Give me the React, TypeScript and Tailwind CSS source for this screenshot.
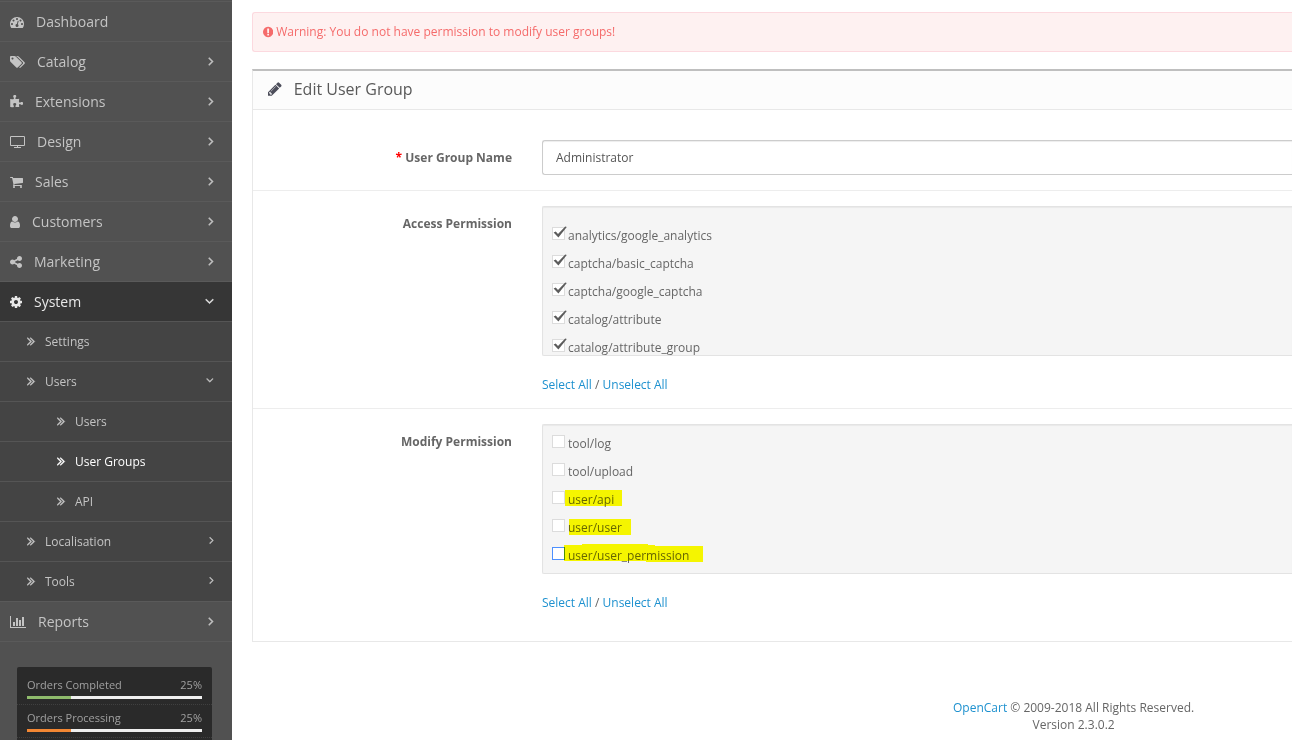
import React from "react";

// each icon keeps its own advance width, drawn on a 1792 unit em
const icons = {
  dashboard: {
    width: 1792,
    d: "M384 1152q0-53-37.5-90.5t-90.5-37.5-90.5 37.5-37.5 90.5 37.5 90.5 90.5 37.5 90.5-37.5 37.5-90.5zm192-448q0-53-37.5-90.5t-90.5-37.5-90.5 37.5-37.5 90.5 37.5 90.5 90.5 37.5 90.5-37.5 37.5-90.5zm428 481l101-382q6-26-7.5-48.5t-38.5-29.5-48 6.5-30 39.5l-101 382q-60 5-107 43.5t-63 98.5q-20 77 20 146t117 89 146-20 89-117q16-60-6-117t-72-91zm660-33q0-53-37.5-90.5t-90.5-37.5-90.5 37.5-37.5 90.5 37.5 90.5 90.5 37.5 90.5-37.5 37.5-90.5zm-640-640q0-53-37.5-90.5t-90.5-37.5-90.5 37.5-37.5 90.5 37.5 90.5 90.5 37.5 90.5-37.5 37.5-90.5zm448 192q0-53-37.5-90.5t-90.5-37.5-90.5 37.5-37.5 90.5 37.5 90.5 90.5 37.5 90.5-37.5 37.5-90.5zm320 448q0 261-141 483-19 29-54 29h-1402q-35 0-54-29-141-221-141-483 0-182 71-348t191-286 286-191 348-71 348 71 286 191 191 286 71 348z",
  },
  tags: {
    width: 1920,
    d: "M448 448q0-53-37.5-90.5t-90.5-37.5-90.5 37.5-37.5 90.5 37.5 90.5 90.5 37.5 90.5-37.5 37.5-90.5zm1067 576q0 53-37 90l-491 492q-39 37-91 37-53 0-90-37l-715-716q-38-37-64.5-101t-26.5-117v-416q0-52 38-90t90-38h416q53 0 117 26.5t102 64.5l715 714q37 39 37 91zm384 0q0 53-37 90l-491 492q-39 37-91 37-36 0-59-14t-53-45l470-470q37-37 37-90 0-52-37-91l-715-714q-38-38-102-64.5t-117-26.5h224q53 0 117 26.5t102 64.5l715 714q37 39 37 91z",
  },
  puzzle: {
    x: 64,
    width: 1664,
    d: "M1755 1083q0 81-44.5 135t-123.5 54q-41 0-77.5-17.5t-59-38-56.5-38-71-17.5q-110 0-110 124 0 39 16 115t15 115v5q-22 0-33 1-34 3-97.5 11.5t-115.5 13.5-98 5q-61 0-103-26.5t-42-83.5q0-37 17.5-71t38-56.5 38-59 17.5-77.5q0-79-54-123.5t-135-44.5q-84 0-143 45.5t-59 127.5q0 43 15 83t33.5 64.5 33.5 53 15 50.5q0 45-46 89-37 35-117 35-95 0-245-24-9-2-27.5-4t-27.5-4l-13-2q-1 0-3-1-2 0-2-1v-1024q2 1 17.5 3.5t34 5 21.5 3.5q150 24 245 24 80 0 117-35 46-44 46-89 0-22-15-50.5t-33.5-53-33.5-64.5-15-83q0-82 59-127.5t144-45.5q80 0 134 44.5t54 123.5q0 41-17.5 77.5t-38 59-38 56.5-17.5 71q0 57 42 83.5t103 26.5q64 0 180-15t163-17v2q-1 2-3.5 17.5t-5 34-3.5 21.5q-24 150-24 245 0 80 35 117 44 46 89 46 22 0 50.5-15t53-33.5 64.5-33.5 83-15q82 0 127.5 59t45.5 143z",
  },
  television: {
    width: 1920,
    d: "M1792 1248v-960q0-13-9.5-22.5t-22.5-9.5h-1600q-13 0-22.5 9.5t-9.5 22.5v960q0 13 9.5 22.5t22.5 9.5h1600q13 0 22.5-9.5t9.5-22.5zm128-960v960q0 66-47 113t-113 47h-736v128h352q14 0 23 9t9 23v64q0 14-9 23t-23 9h-832q-14 0-23-9t-9-23v-64q0-14 9-23t23-9h352v-128h-736q-66 0-113-47t-47-113v-960q0-66 47-113t113-47h1600q66 0 113 47t47 113z",
  },
  cart: {
    x: 64,
    width: 1664,
    d: "M704 1536q0 52-38 90t-90 38-90-38-38-90 38-90 90-38 90 38 38 90zm896 0q0 52-38 90t-90 38-90-38-38-90 38-90 90-38 90 38 38 90zm128-1088v512q0 24-16.5 42.5t-40.5 21.5l-1044 122q13 60 13 70 0 16-24 64h920q26 0 45 19t19 45-19 45-45 19h-1024q-26 0-45-19t-19-45q0-11 8-31.5t16-36 21.5-40 15.5-29.5l-177-823h-204q-26 0-45-19t-19-45 19-45 45-19h256q16 0 28.5 6.5t19.5 15.5 13 24.5 8 26 5.5 29.5 4.5 26h1201q26 0 45 19t19 45z",
  },
  user: {
    x: 256,
    width: 1280,
    d: "M1536 1399q0 109-62.5 187t-150.5 78h-854q-88 0-150.5-78t-62.5-187q0-85 8.5-160.5t31.5-152 58.5-131 94-89 134.5-34.5q131 128 313 128t313-128q76 0 134.5 34.5t94 89 58.5 131 31.5 152 8.5 160.5zm-256-887q0 159-112.5 271.5t-271.5 112.5-271.5-112.5-112.5-271.5 112.5-271.5 271.5-112.5 271.5 112.5 112.5 271.5z",
  },
  share: {
    x: 128,
    width: 1536,
    d: "M1344 1024q133 0 226.5 93.5t93.5 226.5-93.5 226.5-226.5 93.5-226.5-93.5-93.5-226.5q0-12 2-34l-360-180q-92 86-218 86-133 0-226.5-93.5t-93.5-226.5 93.5-226.5 226.5-93.5q126 0 218 86l360-180q-2-22-2-34 0-133 93.5-226.5t226.5-93.5 226.5 93.5 93.5 226.5-93.5 226.5-226.5 93.5q-126 0-218-86l-360 180q2 22 2 34t-2 34l360 180q92-86 218-86z",
  },
  cog: {
    x: 128,
    width: 1536,
    d: "M1152 896q0-106-75-181t-181-75-181 75-75 181 75 181 181 75 181-75 75-181zm512-109v222q0 12-8 23t-20 13l-185 28q-19 54-39 91 35 50 107 138 10 12 10 25t-9 23q-27 37-99 108t-94 71q-12 0-26-9l-138-108q-44 23-91 38-16 136-29 186-7 28-36 28h-222q-14 0-24.5-8.5t-11.5-21.5l-28-184q-49-16-90-37l-141 107q-10 9-25 9-14 0-25-11-126-114-165-168-7-10-7-23 0-12 8-23 15-21 51-66.5t54-70.5q-27-50-41-99l-183-27q-13-2-21-12.5t-8-23.5v-222q0-12 8-23t19-13l186-28q14-46 39-92-40-57-107-138-10-12-10-24 0-10 9-23 26-36 98.5-107.5t94.5-71.5q13 0 26 10l138 107q44-23 91-38 16-136 29-186 7-28 36-28h222q14 0 24.5 8.5t11.5 21.5l28 184q49 16 90 37l142-107q9-9 24-9 13 0 25 10 129 119 165 170 7 8 7 22 0 12-8 23-15 21-51 66.5t-54 70.5q26 50 41 98l183 28q13 2 21 12.5t8 23.5z",
  },
  chart: {
    width: 2048,
    d: "M640 896v512h-256v-512h256zm384-512v1024h-256v-1024h256zm1024 1152v128h-2048v-1536h128v1408h1920zm-640-896v768h-256v-768h256zm384-384v1152h-256v-1152h256z",
  },
  warning: {
    x: 128,
    width: 1536,
    d: "M896 128q209 0 385.5 103t279.5 279.5 103 385.5-103 385.5-279.5 279.5-385.5 103-385.5-103-279.5-279.5-103-385.5 103-385.5 279.5-279.5 385.5-103zm128 1247v-190q0-14-9-23.5t-22-9.5h-192q-13 0-23 10t-10 23v190q0 13 10 23t23 10h192q13 0 22-9.5t9-23.5zm-2-344l18-621q0-12-10-18-10-8-24-8h-220q-14 0-24 8-10 6-10 18l17 621q0 10 10 17.5t24 7.5h185q14 0 23.5-7.5t10.5-17.5z",
  },
  pencil: {
    x: 128,
    width: 1536,
    d: "M491 1536l91-91-235-235-91 91v107h128v128h107zm523-928q0-22-22-22-10 0-17 7l-542 542q-7 7-7 17 0 22 22 22 10 0 17-7l542-542q7-7 7-17zm-54-192l416 416-832 832h-416v-416zm683 96q0 53-37 90l-166 166-416-416 166-165q36-38 90-38 53 0 91 38l235 234q37 39 37 91z",
  },
  angleRight: {
    x: 512,
    width: 768,
    d: "M1171 960q0 13-10 23l-466 466q-10 10-23 10t-23-10l-50-50q-10-10-10-23t10-23l393-393-393-393q-10-10-10-23t10-23l50-50q10-10 23-10t23 10l466 466q10 10 10 23z",
  },
  angleDown: {
    x: 320,
    width: 1152,
    d: "M1395 736q0 13-10 23l-466 466q-10 10-23 10t-23-10l-466-466q-10-10-10-23t10-23l50-50q10-10 23-10t23 10l393 393 393-393q10-10 23-10t23 10l50 50q10 10 10 23z",
  },
  angleDouble: {
    x: 384,
    width: 1152,
    d: "M979 960q0 13-10 23l-466 466q-10 10-23 10t-23-10l-50-50q-10-10-10-23t10-23l393-393-393-393q-10-10-10-23t10-23l50-50q10-10 23-10t23 10l466 466q10 10 10 23zm384 0q0 13-10 23l-466 466q-10 10-23 10t-23-10l-50-50q-10-10-10-23t10-23l393-393-393-393q-10-10-10-23t10-23l50-50q10-10 23-10t23 10l466 466q10 10 10 23z",
  },
};

type IconName = keyof typeof icons;

function Icon({ name, size = 14, bold = 0 }: { name: IconName; size?: number; bold?: number }) {
  const icon: { x?: number; width: number; d: string } = icons[name];
  return (
    <svg
      className="shrink-0"
      width={(icon.width * size) / 1792}
      height={size}
      viewBox={`${icon.x ?? 0} 0 ${icon.width} 1792`}
      fill="currentColor"
      stroke="currentColor"
      strokeWidth={bold}
      aria-hidden="true"
    >
      <path d={icon.d} />
    </svg>
  );
}

type MenuItem = {
  label: string;
  icon: IconName;
  arrow?: "right" | "down";
};

const menu: MenuItem[] = [
  { label: "Dashboard", icon: "dashboard" },
  { label: "Catalog", icon: "tags", arrow: "right" },
  { label: "Extensions", icon: "puzzle", arrow: "right" },
  { label: "Design", icon: "television", arrow: "right" },
  { label: "Sales", icon: "cart", arrow: "right" },
  { label: "Customers", icon: "user", arrow: "right" },
  { label: "Marketing", icon: "share", arrow: "right" },
  { label: "System", icon: "cog", arrow: "down" },
];

const systemMenu = [
  { label: "Settings", level: 1 },
  { label: "Users", level: 1, arrow: "down" },
  { label: "Users", level: 2 },
  { label: "User Groups", level: 2, active: true },
  { label: "API", level: 2 },
  { label: "Localisation", level: 1, arrow: "right" },
  { label: "Tools", level: 1, arrow: "right" },
];

const stats = [
  { label: "Orders Completed", value: 25, color: "bg-[#8fbb6c]" },
  { label: "Orders Processing", value: 25, color: "bg-[#f38733]" },
];

const accessPermissions = [
  "analytics/google_analytics",
  "captcha/basic_captcha",
  "captcha/google_captcha",
  "catalog/attribute",
  "catalog/attribute_group",
];

const modifyPermissions = [
  { name: "tool/log" },
  { name: "tool/upload" },
  { name: "user/api", marker: "13,-1 70,-1 70,15 13,15" },
  { name: "user/user", marker: "17,0 79,0 79,16 17,16" },
  {
    name: "user/user_permission",
    marker: "12,-2 30,-2 30,-3 96,-3 96,-2 103,-2 103,-1 151,-1 151,15 94,15 94,14 12,14",
    focused: true,
  },
];

function MainItem({ label, icon, arrow }: MenuItem) {
  const open = arrow === "down";
  return (
    <a
      href="#"
      className={`flex h-10 items-center gap-3 border-t border-[#5a5a5a] pr-[18px] pl-[10px] text-sm ${
        open ? "bg-[#363636] text-[#e8e8e8]" : "text-[#c4c4c4]"
      }`}
    >
      <Icon name={icon} />
      <span className="flex-1">{label}</span>
      {arrow && (
        <span className="flex pb-px">
          <Icon name={open ? "angleDown" : "angleRight"} size={14} bold={70} />
        </span>
      )}
    </a>
  );
}

function Permission({
  name,
  checked = false,
  marker,
  focused = false,
}: {
  name: string;
  checked?: boolean;
  marker?: string;
  focused?: boolean;
}) {
  return (
    <label className="relative flex h-7 items-start gap-[3px] leading-[18px]">
      <input
        type="checkbox"
        defaultChecked={checked}
        className={`peer h-[13px] w-[13px] shrink-0 appearance-none border bg-white ${
          focused ? "border-[#4d90fe]" : "border-[#dcdcdc]"
        }`}
      />
      <svg
        className="absolute top-0 left-0 hidden h-[13px] w-[15px] overflow-visible peer-checked:block"
        viewBox="0 0 15 13"
        aria-hidden="true"
      >
        <path d="M1.6 5.6L3.8 4.4L6 7L13.2 -0.4L14.8 0L6.4 10.6Z" fill="#5c5c5c" />
      </svg>
      <span>{name}</span>
      {marker && (
        <svg
          className="absolute top-0 left-0 h-4 w-40 overflow-visible mix-blend-multiply"
          viewBox="0 0 160 16"
          aria-hidden="true"
        >
          <polygon points={marker} fill="#ffff00" shapeRendering="crispEdges" />
        </svg>
      )}
    </label>
  );
}

function SelectLinks() {
  return (
    <div className="mt-5 leading-[17px]">
      <a href="#" className="text-[#1e91cf]">
        Select All
      </a>{" "}
      /{" "}
      <a href="#" className="text-[#1e91cf]">
        Unselect All
      </a>
    </div>
  );
}

function Sidebar() {
  return (
    <aside className="flex w-[232px] shrink-0 flex-col bg-[#515151] pt-px">
      <nav>
        {menu.map((item) => (
          <MainItem key={item.label} {...item} />
        ))}
        <div className="bg-[#444]">
          {systemMenu.map((item, i) => (
            <a
              key={i}
              href="#"
              className={`flex h-10 items-center gap-[9px] border-t border-[#555] pr-[18px] ${
                item.level === 1 ? "pl-[27px]" : "pl-[57px]"
              } ${item.active ? "text-white" : "text-[#c4c4c4]"}`}
            >
              <span className="flex pb-px">
                <Icon name="angleDouble" bold={60} />
              </span>
              <span className="flex-1">{item.label}</span>
              {item.arrow && (
                <span className="flex pb-[3px]">
                  <Icon name={item.arrow === "down" ? "angleDown" : "angleRight"} size={12} bold={70} />
                </span>
              )}
            </a>
          ))}
        </div>
        <div className="border-b border-[#5a5a5a]">
          <MainItem label="Reports" icon="chart" arrow="right" />
        </div>
      </nav>

      <div className="mt-[25px] mr-5 ml-[17px] flex-1 rounded-t-[2px] bg-[#2a2a2a] pt-[5px] text-[11px] text-[#a0a0a0]">
        {stats.map((stat) => (
          <div key={stat.label} className="border-b border-dotted border-[#404040] px-[10px] py-[5px]">
            <div className="mb-1 flex justify-between leading-[15px]">
              <span>{stat.label}</span>
              <span>{stat.value}%</span>
            </div>
            <div className="h-[3px] bg-[#efefef]">
              <div className={`h-full ${stat.color}`} style={{ width: `${stat.value}%` }} />
            </div>
          </div>
        ))}
      </div>
    </aside>
  );
}

export default function App() {
  return (
    <div className="flex min-h-screen bg-white font-['Open_Sans',sans-serif] text-xs text-[#666]">
      <Sidebar />

      <main className="min-w-0 flex-1 pt-3 pl-5">
        <div
          role="alert"
          className="flex h-10 items-center gap-[3px] rounded-l-[3px] border border-r-0 border-[#fcd9df] bg-[#fef1f1] px-[10px] text-[#f56b6b]"
        >
          <Icon name="warning" size={12} />
          Warning: You do not have permission to modify user groups!
        </div>

        <section className="mt-[17px] border-t-2 border-b border-l border-t-[#bfbfbf] border-b-[#e8e8e8] border-l-[#e8e8e8]">
          <div className="flex h-[39px] items-center gap-3 border-b border-[#e8e8e8] bg-[#fcfcfc] px-[15px] pb-[2px] text-[#4c4d5a]">
            <Icon name="pencil" size={16} />
            <h1 className="text-base text-[#595959]">Edit User Group</h1>
          </div>

          <form className="py-[15px]">
            <div className="flex py-[15px]">
              <label
                htmlFor="group-name"
                className="w-[274px] shrink-0 pt-[9px] pr-[15px] text-right leading-[17px] font-bold"
              >
                <span className="text-[#f00]">*</span> User Group Name
              </label>
              <div className="min-w-0 flex-1 pl-[15px]">
                <input
                  id="group-name"
                  type="text"
                  defaultValue="Administrator"
                  className="block h-[35px] w-full rounded-l-[3px] border border-r-0 border-[#ccc] px-[13px] text-[#555] shadow-[inset_0_1px_1px_rgba(0,0,0,0.075)] outline-none"
                />
              </div>
            </div>

            <div className="flex border-t border-[#ededed] py-[15px]">
              <div
                id="access-label"
                className="w-[274px] shrink-0 pt-[9px] pr-[15px] text-right leading-[17px] font-bold"
              >
                Access Permission
              </div>
              <div className="min-w-0 flex-1 pl-[15px]">
                <div
                  role="group"
                  aria-labelledby="access-label"
                  className="h-[150px] overflow-hidden rounded-l-[2px] border border-r-0 border-[#e3e3e3] bg-[#f5f5f5] px-[9px] pt-5 shadow-[inset_0_1px_1px_rgba(0,0,0,0.05)]"
                >
                  {accessPermissions.map((name) => (
                    <Permission key={name} name={name} checked />
                  ))}
                </div>
                <SelectLinks />
              </div>
            </div>

            <div className="flex border-t border-[#ededed] py-[15px]">
              <div
                id="modify-label"
                className="w-[274px] shrink-0 pt-[9px] pr-[15px] text-right leading-[17px] font-bold"
              >
                Modify Permission
              </div>
              <div className="min-w-0 flex-1 pl-[15px]">
                <div
                  role="group"
                  aria-labelledby="modify-label"
                  className="h-[150px] overflow-hidden rounded-l-[2px] border border-r-0 border-[#e3e3e3] bg-[#f5f5f5] px-[9px] pt-[10px] shadow-[inset_0_1px_1px_rgba(0,0,0,0.05)]"
                >
                  {modifyPermissions.map((permission) => (
                    <Permission key={permission.name} {...permission} />
                  ))}
                </div>
                <SelectLinks />
              </div>
            </div>
          </form>
        </section>

        <footer className="mt-[57px] pl-[58%] text-center leading-[17px]">
          <a href="#" className="text-[#1e91cf]">
            OpenCart
          </a>{" "}
          © 2009-2018 All Rights Reserved.
          <br />
          Version 2.3.0.2
        </footer>
      </main>
    </div>
  );
}
